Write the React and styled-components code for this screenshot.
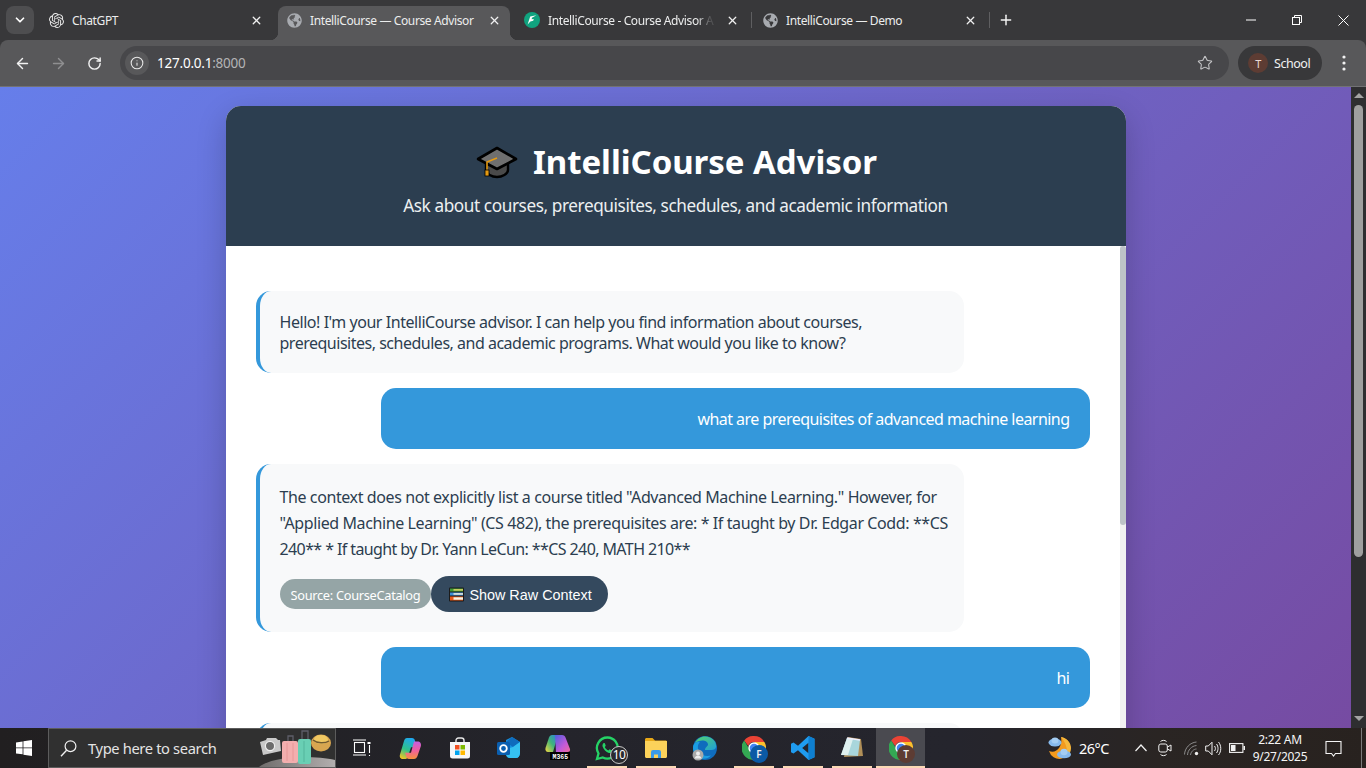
import React from "react";
import styled, { createGlobalStyle } from "styled-components";
import { ArrowLeft, ArrowRight, RotateCw, Info, Star, X, Plus, ChevronDown } from "lucide-react";
import { FaGlobeAmericas } from "react-icons/fa";
import { SiOpenai } from "react-icons/si";

const UI = `"Noto Sans", "Open Sans", "Liberation Sans", sans-serif`;

const Global = createGlobalStyle`
  html, body { margin: 0; padding: 0; height: 100%; overflow: hidden; }
  * { box-sizing: border-box; }
  body { font-family: ${UI}; }
`;

const Screen = styled.div`
  width: 1366px; height: 768px; display: flex; flex-direction: column; overflow: hidden;
`;

/* ---------- browser chrome ---------- */
const TabStrip = styled.div`
  height: 40px; flex: none; background: #38383a; display: flex; padding-left: 6px; color: #fff;
`;
const TabSearch = styled.div`
  width: 28px; height: 28px; margin: 6px 6px 0 0; border-radius: 8px; background: #4e4e50;
  display: flex; align-items: center; justify-content: center; flex: none;
`;
const Tabs = styled.div`display: flex; gap: 6px; align-items: stretch;`;
const Tab = styled.div`
  position: relative; width: 232px; height: 34px; margin-top: 6px; padding: 0 9px 6px 8px;
  display: flex; align-items: center; gap: 8px; border-radius: 8px 8px 0 0; flex: none;
  background: ${p => (p.$active ? "#58585a" : "transparent")};
  ${p => p.$active && `
    &::before, &::after { content: ""; position: absolute; bottom: 0; width: 8px; height: 8px; }
    &::before { left: -8px; background: radial-gradient(circle at 0 0, transparent 8px, #58585a 8.5px); }
    &::after { right: -8px; background: radial-gradient(circle at 100% 0, transparent 8px, #58585a 8.5px); }
  `}
  ${p => p.$divider && `
    &::after { content: ""; position: absolute; right: -4px; top: 6px; width: 1px; height: 16px; background: #5f5f61; }
  `}
`;
const TabIcon = styled.span`width: 16px; height: 16px; flex: none; display: flex; align-items: center; justify-content: center;`;
const TabTitle = styled.span`
  flex: 1; min-width: 0; font-size: 12px; letter-spacing: -0.38px; white-space: nowrap; color: #eceded;
  ${p => p.$fade && `-webkit-mask-image: linear-gradient(90deg, #000 88%, rgba(0,0,0,.15) 96%); mask-image: linear-gradient(90deg, #000 88%, rgba(0,0,0,.15) 96%);`}
`;
const TabClose = styled.span`width: 14px; height: 14px; flex: none; display: flex; align-items: center; justify-content: center;`;
const NewTab = styled.div`width: 28px; margin-left: 6px; height: 34px; margin-top: 6px; padding-bottom: 6px; display: flex; align-items: center; justify-content: center;`;
const WindowControls = styled.div`margin-left: auto; display: flex;`;
const WindowButton = styled.div`width: 46px; height: 40px; display: flex; align-items: center; justify-content: center;`;

const Toolbar = styled.div`height: 47px; flex: none; background: #38383a;`;
const ToolbarInner = styled.div`
  height: 47px; background: #58585a; border-radius: 8px 8px 0 0; border-bottom: 1px solid #727274;
  display: flex; align-items: flex-start; padding: 0 4px; color: #fff;
`;
const NavButton = styled.div`
  width: 36px; height: 34px; margin-top: 6px; flex: none; display: flex; align-items: center; justify-content: center;
  color: ${p => (p.$off ? "#8f8f91" : "#f2f2f2")};
`;
const Omnibox = styled.div`
  flex: 1; height: 34px; margin: 6px 0 0 8px; background: #47474a; border-radius: 17px;
  display: flex; align-items: center; padding: 0 8px 0 5px;
`;
const InfoChip = styled.div`
  width: 24px; height: 24px; border-radius: 50%; background: #58585a; flex: none;
  display: flex; align-items: center; justify-content: center; color: #e8e8e8;
`;
const Url = styled.div`margin-left: 8px; font-size: 13.5px; letter-spacing: -0.22px; color: #fff; span { color: #b4b4b6; }`;
const StarSlot = styled.div`margin-left: auto; width: 32px; display: flex; justify-content: center; color: #c4c4c6;`;
const Profile = styled.div`
  width: 84px; height: 34px; margin: 6px 4px 0 9px; border-radius: 17px; background: #38383a; flex: none;
  display: flex; align-items: center; padding-left: 10px; gap: 6px; font-size: 12.5px; letter-spacing: -0.45px; color: #f1f1f1;
`;
const Avatar = styled.span`
  width: 20px; height: 20px; border-radius: 50%; background: #5d3c33; color: #e9d9d3; font-size: 11px;
  display: flex; align-items: center; justify-content: center;
`;

/* ---------- page ---------- */
const Viewport = styled.div`flex: 1; min-height: 0; display: flex;`;
const Page = styled.div`
  flex: 1; min-width: 0; overflow: hidden; padding-top: 19px;
  background: linear-gradient(135deg, #667eea 0%, #764ba2 100%);
`;
const Card = styled.main`
  width: 900px; height: 700px; margin: 0 auto; background: #fff; border-radius: 15px; overflow: hidden;
  box-shadow: 0 10px 30px rgba(0, 0, 0, 0.2); display: flex; flex-direction: column;
`;
const Header = styled.header`
  height: 140px; flex: none; background: #2c3e50; color: #fff; display: flex; flex-direction: column; align-items: center;
  padding-top: 33px;
`;
const Title = styled.h1`
  margin: 0; padding-left: 2px; font-size: 33px; line-height: 45px; font-weight: 700; letter-spacing: -0.05px; display: flex; align-items: center; gap: 15px;
`;
const Subtitle = styled.p`margin: 10px 0 0; font-size: 17.2px; line-height: 24px; letter-spacing: -0.41px; color: #ecf0f1;`;
const ChatBody = styled.div`flex: 1; min-height: 0; display: flex;`;
const Messages = styled.div`
  flex: 1; min-width: 0; padding: 45px 30px 0; display: flex; flex-direction: column; gap: 15px; overflow: hidden;
`;
const Bubble = styled.div`
  width: 85%; flex: none; border-radius: 15px; font-size: 16px; min-height: 61px;
  line-height: ${p => p.$lh || 21}px;
  padding: ${p => (p.$lh ? "20px" : "21px 20px 19px")};
  ${p => p.$user
    ? `align-self: flex-end; background: #3498db; color: #fff; text-align: right;`
    : `align-self: flex-start; background: #f8f9fa; color: #2c3e50; border-left: 4px solid #3498db;`}
`;
const Line = styled.span`display: block; white-space: nowrap; letter-spacing: ${p => p.$ls}px;`;
const Meta = styled.div`display: flex; align-items: center; margin-top: 14px;`;
const Source = styled.span`
  height: 30px; padding: 1px 11px 0; border-radius: 15px; background: #95a5a6; color: #fff; font-size: 12.8px; letter-spacing: -0.3px;
  display: flex; align-items: center;
`;
const RawButton = styled.button`
  height: 36px; padding: 1px 16px 0 18px; border: 0; border-radius: 18px; background: #34495e; color: #fff;
  font: 14.4px "Liberation Sans", Arial, sans-serif; display: flex; align-items: center; gap: 5px;
`;
const ChatTrack = styled.div`width: 6px; flex: none; background: #f1f1f1;`;
const ChatThumb = styled.div`height: 279px; background: #bdc3c7; border-radius: 3px;`;

const PageScrollbar = styled.div`
  width: 15px; flex: none; background: #2e2e30; display: flex; flex-direction: column; align-items: center;
`;
const ScrollArrow = styled.div`
  width: 0; height: 0; border-left: 5px solid transparent; border-right: 5px solid transparent; flex: none;
  ${p => p.$up ? `border-bottom: 5px solid #a3a3a3; margin-top: 6px;` : `border-top: 5px solid #a3a3a3; margin-top: auto; margin-bottom: 7px;`}
`;
const ScrollThumb = styled.div`width: 9px; height: 452px; margin-top: 7px; border-radius: 5px; background: #9f9f9f; flex: none;`;

/* ---------- taskbar ---------- */
const Taskbar = styled.footer`
  height: 40px; flex: none; display: flex; color: #fff;
  background: linear-gradient(90deg, #211f20 0%, #24242b 40%, #25252d 70%, #2a2523 85%, #28221f 100%);
`;
const Start = styled.div`width: 48px; flex: none; display: flex; align-items: center; justify-content: center;`;
const SearchBox = styled.div`
  width: 288px; flex: none; height: 40px; background: #303030; border: 1px solid #5c5c5c;
  display: flex; align-items: center; padding-left: 11px; position: relative; overflow: hidden;
`;
const SearchText = styled.span`margin-left: 11px; font-size: 14.7px; letter-spacing: -0.36px; color: #e4e4e4;`;
const SearchArt = styled.span`position: absolute; right: 0; bottom: 0; width: 76px; height: 38px; display: block;`;
const TaskIcons = styled.div`display: flex; margin-left: 1px;`;
const TaskIcon = styled.div`
  position: relative; width: 49px; height: 40px; flex: none; display: flex; align-items: center; justify-content: center;
  background: ${p => (p.$active ? "#4a4a50" : "transparent")};
  ${p => p.$open && `
    &::after { content: ""; position: absolute; bottom: 0; left: ${p.$active ? 0 : "4.5px"}; right: ${p.$active ? 0 : "4.5px"}; height: 2px; background: #fbd9b5; }
  `}
`;
const Tray = styled.div`margin-left: auto; display: flex; align-items: center;`;
const Weather = styled.div`display: flex; align-items: center; gap: 6px; font-size: 14.5px; letter-spacing: -0.5px; margin-right: 20px;`;
const TrayIcon = styled.div`
  width: 24px; height: 40px; padding-left: ${p => p.$pad || 0}px; display: flex; align-items: center; justify-content: center;
`;
const Clock = styled.div`
  width: 62px; font-size: 12px; line-height: 17px; text-align: center; letter-spacing: -0.25px; color: #f5f5f5; white-space: nowrap;
`;
const Notify = styled.div`width: 36px; margin: 0 10px 0 4px; display: flex; justify-content: center;`;
const ShowDesktop = styled.div`width: 5px; height: 40px; border-left: 1px solid #7a7a7a;`;

/* ---------- drawings ---------- */
const Cap = () => (
  <svg width="42" height="34" viewBox="0 0 42 34" aria-hidden="true">
    <path d="M10 15v10c0 4 6 7 11 7s11-3 11-7V15z" fill="#4a4a4a" stroke="#000" strokeWidth="2.4" />
    <path d="M21 3 40 14 21 24 2 14z" fill="#6f6f6f" stroke="#000" strokeWidth="2.6" strokeLinejoin="round" />
    <path d="M21 13 11 17v9" fill="none" stroke="#e59a12" strokeWidth="1.6" />
    <rect x="9" y="25" width="4" height="6" fill="#e59a12" stroke="#000" strokeWidth=".8" />
  </svg>
);
const Books = () => (
  <svg width="15" height="15" viewBox="0 0 15 15" aria-hidden="true">
    <rect x="0" y="0.5" width="15" height="14" rx="1" fill="#1b1b1b" />
    <rect x="1" y="1.5" width="13" height="3" fill="#3f9b35" />
    <rect x="4.5" y="2.2" width="9.5" height="1.4" fill="#e7d86a" />
    <rect x="1" y="5.5" width="13" height="3" fill="#3d90d8" />
    <rect x="4.5" y="6.2" width="9.5" height="1.5" fill="#f0eedd" />
    <rect x="1" y="9.5" width="13" height="4" fill="#e85a1a" />
    <rect x="4.5" y="10.3" width="9.5" height="2.4" fill="#f6f3e3" />
  </svg>
);
const Brand = () => (
  <svg width="16" height="16" viewBox="0 0 16 16" aria-hidden="true">
    <circle cx="8" cy="8" r="8" fill="#10a37f" />
    <path d="M12.4 3.2 6.2 4.4 3.6 12.6 6.4 9.4 9.2 8.8 9.8 7 7.6 7.2 8 5.8z" fill="#fff" />
  </svg>
);
const WinLogo = () => (
  <svg width="16" height="16" viewBox="0 0 16 16" aria-hidden="true">
    <path d="M0 2.4 6.6 1.4V7.4H0zM7.4 1.3 16 0V7.4H7.4zM0 8.2H6.6V14.3L0 13.4zM7.4 8.2H16V16L7.4 14.8z" fill="#fff" />
  </svg>
);
const Lens = () => (
  <svg width="17" height="17" viewBox="0 0 17 17" fill="none" stroke="#f0f0f0" strokeWidth="1.2" aria-hidden="true">
    <circle cx="10.5" cy="6.2" r="5.4" /><path d="M6.6 10.2 1 16.2" strokeWidth="1.4" />
  </svg>
);
const Art = () => (
  <svg width="76" height="38" viewBox="0 0 76 38" aria-hidden="true" style={{ display: "block" }}>
    <defs>
      <linearGradient id="gr" x1="0" y1="0" x2="1" y2="0"><stop offset="0" stopColor="#6f6c6b" /><stop offset="1" stopColor="#b2aeae" /></linearGradient>
    </defs>
    <path d="M0 38C8 32 24 28 44 28c12 0 24 1 32 3v7z" fill="url(#gr)" />
    <path d="M1 13l6-2 1-2h9l2 2h2l1 11-18 4z" fill="#c9c9c9" />
    <circle cx="11" cy="17" r="4.6" fill="#6c6c6c" stroke="#eee" strokeWidth="1.2" />
    <path d="M29 13V7h5v6" fill="none" stroke="#5e5e68" strokeWidth="1.3" />
    <rect x="23" y="12" width="16" height="22" rx="2" fill="#f3aeae" />
    <path d="M28 14v18M34 14v18" stroke="#e39393" strokeWidth=".8" />
    <path d="M43 10V2h6v8" fill="none" stroke="#5e5e68" strokeWidth="1.3" />
    <rect x="39" y="10" width="13" height="25" rx="2" fill="#69cfb4" />
    <path d="M45 12v21" stroke="#4fae97" strokeWidth=".8" />
    <ellipse cx="62" cy="14" rx="10" ry="8.500" fill="#d8a650" />
    <ellipse cx="62" cy="10.500" rx="7" ry="4.500" fill="#f0c862" />
    <path d="M54 11c4 3.500 12 3.500 16 1" fill="none" stroke="#705a30" strokeWidth="1.4" />
  </svg>
);
const TaskView = () => (
  <svg width="18" height="18" viewBox="0 0 18 18" fill="none" stroke="#fff" strokeWidth="1.1" aria-hidden="true">
    <rect x="1.5" y="3.5" width="10" height="10" /><path d="M0 1h13M0 16h13M16.5 6v8M16.5 16v1" />
    <rect x="14.5" y="3" width="3" height="2" fill="#fff" stroke="none" />
  </svg>
);
const Copilot = () => (
  <svg width="23" height="23" viewBox="0 0 23 23" aria-hidden="true">
    <defs>
      <linearGradient id="cp1" x1="0.6" y1="0" x2="0.2" y2="1"><stop offset="0" stopColor="#1fa8ee" /><stop offset=".55" stopColor="#2fc28a" /><stop offset="1" stopColor="#f2c524" /></linearGradient>
      <linearGradient id="cp2" x1="0.5" y1="0" x2="0.5" y2="1"><stop offset="0" stopColor="#c65fe0" /><stop offset=".5" stopColor="#ef5fa0" /><stop offset="1" stopColor="#f5923c" /></linearGradient>
    </defs>
    <path d="M8 1h5c1.800 0 2.400 1 2.800 2.200l2 7H12L8.600 20.500C8 22 7 22 5.500 22H4C1.500 22 .2 20 1 17.500L5 4C5.600 2 6.500 1 8 1z" fill="url(#cp1)" />
    <path d="M15 22H10c-1.800 0-2.400-1-2.800-2.200l-1-4H12L15 4.500h3.500c2.600 0 4 2 3.400 4.600l-3.400 10C17.800 21 16.600 22 15 22z" fill="url(#cp2)" />
  </svg>
);
const Store = () => (
  <svg width="22" height="22" viewBox="0 0 22 22" aria-hidden="true">
    <path d="M7 5V3.500C7 2 8 1 9.500 1h3C14 1 15 2 15 3.500V5" fill="none" stroke="#e6e6e6" strokeWidth="1.4" />
    <path d="M1 5h20v14c0 1.700-1 2.500-2.500 2.500h-15C2 21.500 1 20.700 1 19z" fill="#f5f6f7" />
    <rect x="6" y="8" width="4.500" height="4.500" fill="#f25022" /><rect x="11.500" y="8" width="4.500" height="4.500" fill="#7fba00" />
    <rect x="6" y="13.500" width="4.500" height="4.500" fill="#00a4ef" /><rect x="11.500" y="13.500" width="4.500" height="4.500" fill="#ffb900" />
  </svg>
);
const Outlook = () => (
  <svg width="24" height="24" viewBox="0 0 24 24" aria-hidden="true">
    <path d="M9 4 15 1l8 5v11c0 3-2 5-4 5h-6c-2 0-4-1-4-4z" fill="#1490df" />
    <path d="M15 1l8 5-7 5-7-5z" fill="#0f6cbd" />
    <path d="M9 13l7-2 7-5v11c0 3-2 5-4 5h-6c-2 0-4-2-4-4z" fill="#35c1f1" />
    <rect x="0" y="6" width="13" height="13" rx="1.500" fill="#0a5fb0" />
    <circle cx="6.500" cy="12.500" r="3.300" fill="none" stroke="#fff" strokeWidth="1.800" />
  </svg>
);
const M365Tag = styled.text`font: 700 6.5px "Liberation Mono", monospace; fill: #fff;`;
const M365 = () => (
  <svg width="26" height="26" viewBox="0 0 26 26" aria-hidden="true">
    <defs>
      <linearGradient id="m1" x1="0" y1="1" x2="1" y2="0"><stop offset="0" stopColor="#f5d83e" /><stop offset=".5" stopColor="#3fb57a" /><stop offset="1" stopColor="#2f7fe0" /></linearGradient>
      <linearGradient id="m2" x1="0" y1="0" x2="1" y2="1"><stop offset="0" stopColor="#4f5fe0" /><stop offset=".6" stopColor="#c45ad8" /><stop offset="1" stopColor="#f06a9a" /></linearGradient>
    </defs>
    <path d="M7 0h6L8 17H3C1 17 0 15 .5 13L4 2.500C4.500 1 5.500 0 7 0z" fill="url(#m1)" />
    <path d="M10 0h7c2 0 3 1 3.500 2.500L25 14c.5 2-.5 3-2.500 3H11z" fill="url(#m2)" />
    <rect x="5" y="17" width="20" height="8" fill="#000" />
    <M365Tag x="7.500" y="23.500">M365</M365Tag>
  </svg>
);
const WhatsAppBadge = styled.span`
  position: absolute; left: 28px; top: 18px; width: 18px; height: 18px; border-radius: 50%; background: #2a2a2e; border: 1px solid #c9c9c9;
  font-size: 12px; line-height: 15px; letter-spacing: -0.6px; text-align: center; color: #fff;
`;
const WhatsApp = () => (
  <svg width="24" height="25" viewBox="0 0 24 25" aria-hidden="true">
    <path d="M12.500 1.500a10.500 10.500 0 0 0-9 16L2 23l5.800-1.500A10.500 10.500 0 1 0 12.500 1.500z" fill="none" stroke="#25d366" strokeWidth="2.300" />
    <path d="M8.800 7c-1 .5-1.600 2-1.200 3.500.9 3 3.400 5.400 6.300 6.400 1.600.5 3-.2 3.600-1.300.3-.6 0-1-.4-1.200l-2-1c-.4-.2-.7 0-1 .4l-.6.700c-1.700-.6-3-1.900-3.700-3.500l.6-.7c.3-.4.400-.7.200-1.100l-.8-1.900C9.500 6.900 9.200 6.800 8.800 7z" fill="#25d366" />
  </svg>
);
const Explorer = () => (
  <svg width="22" height="20" viewBox="0 0 22 20" aria-hidden="true">
    <path d="M0 1.500C0 .7.700 0 1.500 0h6L10 2.500h10.500c.8 0 1.500.7 1.500 1.500v2H0z" fill="#e8a817" />
    <path d="M0 3h22v15.500c0 .8-.7 1.500-1.500 1.500h-19C.7 20 0 19.300 0 18.500z" fill="#fcd25a" />
    <path d="M6 14a2 2 0 0 1 2-2h6a2 2 0 0 1 2 2v6h-3v-3.500H9V20H6z" fill="#3b9ae8" />
  </svg>
);
const Edge = () => (
  <svg width="25" height="25" viewBox="0 0 25 25" aria-hidden="true">
    <defs>
      <linearGradient id="e1" x1="0" y1="0" x2="1" y2="1"><stop offset="0" stopColor="#54d36b" /><stop offset="1" stopColor="#1f9fd8" /></linearGradient>
    </defs>
    <circle cx="13" cy="12" r="12" fill="#0f6cbd" />
    <path d="M3 7C6 1 12-1 18 1.500c4 1.700 6.500 5.500 6 9.500-.2 2-2 3-4.500 3H13c0-3 3-3.500 3-5.500C16 5 11 3.500 7 5 5 5.800 4 6.500 3 7z" fill="url(#e1)" />
    <path d="M1 12C1 7 5 5 8 6c-2 2-3 5-1 9 2 4 7 6 12 4.500-2 2.500-6 4-10 3C4 21 1 17 1 12z" fill="#1b9de2" />
    <circle cx="6" cy="19" r="5.500" fill="#a9a9a9" />
    <circle cx="6" cy="17.500" r="2" fill="#ededed" /><path d="M2.500 22.500c.5-2 2-3 3.500-3s3 1 3.500 3z" fill="#ededed" />
  </svg>
);
const ProfileDot = styled.span`
  position: absolute; left: 21px; top: 17px; width: 18px; height: 18px; border-radius: 50%;
  background: ${p => p.$bg}; color: #f0f0f0; font-size: 10px; font-weight: 600; text-align: center; line-height: 18px;
`;
const Chrome = () => (
  <svg width="24" height="24" viewBox="0 0 24 24" aria-hidden="true">
    <path d="M12 0a12 12 0 0 1 10.400 6H12a6 6 0 0 0-5.700 4.100L2.200 4.400A12 12 0 0 1 12 0z" fill="#ea4335" />
    <path d="M2.200 4.400 7 12.500a5.500 5.500 0 0 0 6.500 5.300L9.800 23.800A12 12 0 0 1 2.200 4.400z" fill="#34a853" />
    <path d="M22.400 6A12 12 0 0 1 9.800 23.800l5-8a6 6 0 0 0 1.400-6.500L12 6z" fill="#fbc02d" />
    <circle cx="12" cy="12" r="5" fill="#4285f4" stroke="#fff" strokeWidth="1.400" />
  </svg>
);
const VSCode = () => (
  <svg width="24" height="24" viewBox="0 0 24 24" aria-hidden="true">
    <path d="M17.500 0 23.500 2.800v18.400L17.500 24 7 14.200l-4.500 3.400L0 16.300v-8.600l2.500-1.300L7 9.800zM17.500 6.800 11.200 12l6.300 5.200z" fill="#1f9cf0" />
    <path d="M17.500 0 23.500 2.800v18.400L17.500 24z" fill="#0e7fd0" />
  </svg>
);
const Notepad = () => (
  <svg width="24" height="24" viewBox="0 0 24 24" aria-hidden="true">
    <path d="M8 1 21 3 23 20 4 21z" fill="#b08f58" />
    <path d="M7 2 20 4 18 20 1 19z" fill="#a9d6dc" />
    <path d="M7 2 13 3 8 19 1 19z" fill="#dff1f0" />
    <path d="M7 2 20 4" stroke="#eef" strokeWidth="1.400" />
  </svg>
);
const WeatherIcon = () => (
  <svg width="25" height="25" viewBox="0 0 25 25" aria-hidden="true">
    <path d="M13 1a11 11 0 1 1-12 14c7 3 14-4 12-14z" fill="#f39a1e" />
    <path d="M13 1c6 1 10 6 10 11 0 4-2 7-4 9 1-7-1-14-6-20z" fill="#f6b73c" />
    <ellipse cx="7" cy="6.500" rx="6.500" ry="4" fill="#86b9ec" />
    <ellipse cx="7" cy="4.500" rx="3.500" ry="3" fill="#a4cdf3" />
    <ellipse cx="16" cy="18.500" rx="7" ry="3.800" fill="#86b9ec" />
    <ellipse cx="16" cy="16" rx="3.500" ry="3.200" fill="#a4cdf3" />
  </svg>
);
const Caret = () => (
  <svg width="14" height="10" viewBox="0 0 14 10" fill="none" stroke="#f2f2f2" strokeWidth="1.200" aria-hidden="true"><path d="M1.500 8 7 2l5.500 6" /></svg>
);
const Meet = () => (
  <svg width="14" height="18" viewBox="0 0 14 18" fill="none" stroke="#f2f2f2" strokeWidth="1" aria-hidden="true">
    <rect x=".8" y="5" width="8.500" height="8" rx="2" /><path d="M9.500 8 13 6v6l-3.500-2M2.500 2.500C4 1 7 1 8.500 2.500M2.500 15.500c1.500 1.500 4.500 1.500 6 0" />
  </svg>
);
const Wifi = () => (
  <svg width="15" height="15" viewBox="0 0 15 15" fill="none" stroke="#8b8b8b" strokeWidth="1" aria-hidden="true">
    <path d="M.5 13.500C.8 7 6 1.500 12.500 1M3.500 14C3.800 9 7.500 5 12.500 4.500M6.500 14c.3-3 3-6 6-6" />
    <circle cx="12.500" cy="12.500" r="1.700" fill="#f0f0f0" stroke="none" />
  </svg>
);
const Volume = () => (
  <svg width="17" height="15" viewBox="0 0 17 15" fill="none" stroke="#f2f2f2" strokeWidth="1" aria-hidden="true">
    <path d="M.7 5h2.600L7 1.200v12.600L3.300 10H.7zM9.500 5c1.200 1.500 1.200 3.500 0 5M11.500 3c2 2.500 2 6.500 0 9M13.500 1c3 3.500 3 9.500 0 13" />
  </svg>
);
const Battery = () => (
  <svg width="16" height="10" viewBox="0 0 16 10" aria-hidden="true">
    <rect x=".6" y=".6" width="13.300" height="8.800" fill="none" stroke="#f2f2f2" strokeWidth="1.100" />
    <rect x="2" y="2" width="4.500" height="6" fill="#f2f2f2" /><rect x="14.500" y="3" width="1.500" height="4" fill="#f2f2f2" />
  </svg>
);
const NotifyIcon = () => (
  <svg width="17" height="17" viewBox="0 0 17 17" fill="none" stroke="#f4f4f4" strokeWidth="1.100" aria-hidden="true">
    <path d="M1 1.500h15v12h-5.500L8.500 16 6.500 13.500H1z" />
  </svg>
);

const tabs = [
  { title: "ChatGPT", icon: <SiOpenai size={15} color="#e8e8e8" /> },
  { title: "IntelliCourse — Course Advisor", icon: <FaGlobeAmericas size={15} color="#a8abb0" />, active: true },
  { title: "IntelliCourse - Course Advisor A", icon: <Brand />, fade: true, divider: true },
  { title: "IntelliCourse — Demo", icon: <FaGlobeAmericas size={15} color="#a8abb0" />, divider: true },
];

export default function App() {
  return (
    <Screen>
      <Global />
      <TabStrip>
        <TabSearch><ChevronDown size={14} strokeWidth={3} color="#fff" /></TabSearch>
        <Tabs>
          {tabs.map(t => (
            <Tab key={t.title} $active={t.active} $divider={t.divider}>
              <TabIcon>{t.icon}</TabIcon>
              <TabTitle $fade={t.fade}>{t.title}</TabTitle>
              <TabClose><X size={13} strokeWidth={2.4} color="#f0f0f0" /></TabClose>
            </Tab>
          ))}
        </Tabs>
        <NewTab><Plus size={16} strokeWidth={2.2} color="#f4f4f4" /></NewTab>
        <WindowControls>
          <WindowButton>
            <svg width="10" height="2" viewBox="0 0 10 2" stroke="#fff" strokeWidth="1" aria-hidden="true"><path d="M0 1h10" /></svg>
          </WindowButton>
          <WindowButton>
            <svg width="10" height="10" viewBox="0 0 10 10" fill="none" stroke="#fff" strokeWidth="1" aria-hidden="true">
              <rect x=".5" y="2.500" width="7" height="7" /><path d="M2.500 2.500V.5h7v7h-2" />
            </svg>
          </WindowButton>
          <WindowButton>
            <svg width="11" height="11" viewBox="0 0 11 11" stroke="#fff" strokeWidth="1" aria-hidden="true"><path d="M.5.5l10 10M10.500.5l-10 10" /></svg>
          </WindowButton>
        </WindowControls>
      </TabStrip>
      <Toolbar>
        <ToolbarInner>
          <NavButton><ArrowLeft size={17} strokeWidth={2} /></NavButton>
          <NavButton $off><ArrowRight size={17} strokeWidth={2} /></NavButton>
          <NavButton><RotateCw size={15} strokeWidth={2.3} /></NavButton>
          <Omnibox>
            <InfoChip><Info size={14} strokeWidth={1.8} /></InfoChip>
            <Url>127.0.0.1<span>:8000</span></Url>
            <StarSlot><Star size={16} strokeWidth={1.6} /></StarSlot>
          </Omnibox>
          <Profile><Avatar>T</Avatar>School</Profile>
          <NavButton>
            <svg width="4" height="16" viewBox="0 0 4 16" fill="#f2f2f2" aria-hidden="true"><circle cx="2" cy="2" r="1.600" /><circle cx="2" cy="8" r="1.600" /><circle cx="2" cy="14" r="1.600" /></svg>
          </NavButton>
        </ToolbarInner>
      </Toolbar>
      <Viewport>
        <Page>
          <Card>
            <Header>
              <Title><Cap />IntelliCourse Advisor</Title>
              <Subtitle>Ask about courses, prerequisites, schedules, and academic information</Subtitle>
            </Header>
            <ChatBody>
              <Messages>
                <Bubble>
                  <Line $ls={-0.45}>Hello! I'm your IntelliCourse advisor. I can help you find information about courses,</Line>
                  <Line $ls={-0.49}>prerequisites, schedules, and academic programs. What would you like to know?</Line>
                </Bubble>
                <Bubble $user><Line $ls={-0.54}>what are prerequisites of advanced machine learning</Line></Bubble>
                <Bubble $lh={26}>
                  <Line $ls={-0.4}>The context does not explicitly list a course titled "Advanced Machine Learning." However, for</Line>
                  <Line $ls={-0.4}>"Applied Machine Learning" (CS 482), the prerequisites are: * If taught by Dr. Edgar Codd: **CS</Line>
                  <Line $ls={-0.6}>240** * If taught by Dr. Yann LeCun: **CS 240, MATH 210**</Line>
                  <Meta>
                    <Source>Source: CourseCatalog</Source>
                    <RawButton><Books />Show Raw Context</RawButton>
                  </Meta>
                </Bubble>
                <Bubble $user><Line $ls={-0.45}>hi</Line></Bubble>
                <Bubble />
              </Messages>
              <ChatTrack><ChatThumb /></ChatTrack>
            </ChatBody>
          </Card>
        </Page>
        <PageScrollbar>
          <ScrollArrow $up />
          <ScrollThumb />
          <ScrollArrow />
        </PageScrollbar>
      </Viewport>
      <Taskbar>
        <Start><WinLogo /></Start>
        <SearchBox>
          <Lens />
          <SearchText>Type here to search</SearchText>
          <SearchArt><Art /></SearchArt>
        </SearchBox>
        <TaskIcons>
          <TaskIcon><TaskView /></TaskIcon>
          <TaskIcon><Copilot /></TaskIcon>
          <TaskIcon><Store /></TaskIcon>
          <TaskIcon><Outlook /></TaskIcon>
          <TaskIcon><M365 /></TaskIcon>
          <TaskIcon $open><WhatsApp /><WhatsAppBadge>10</WhatsAppBadge></TaskIcon>
          <TaskIcon $open><Explorer /></TaskIcon>
          <TaskIcon><Edge /></TaskIcon>
          <TaskIcon $open><Chrome /><ProfileDot $bg="#0b5aa5">F</ProfileDot></TaskIcon>
          <TaskIcon $open><VSCode /></TaskIcon>
          <TaskIcon $open><Notepad /></TaskIcon>
          <TaskIcon $open $active><Chrome /><ProfileDot $bg="#5d3c33">T</ProfileDot></TaskIcon>
        </TaskIcons>
        <Tray>
          <Weather><WeatherIcon />26°C</Weather>
          <TrayIcon><Caret /></TrayIcon>
          <TrayIcon><Meet /></TrayIcon>
          <TrayIcon $pad={4}><Wifi /></TrayIcon>
          <TrayIcon><Volume /></TrayIcon>
          <TrayIcon><Battery /></TrayIcon>
          <Clock>2:22 AM<br />9/27/2025</Clock>
          <Notify><NotifyIcon /></Notify>
          <ShowDesktop />
        </Tray>
      </Taskbar>
    </Screen>
  );
}
